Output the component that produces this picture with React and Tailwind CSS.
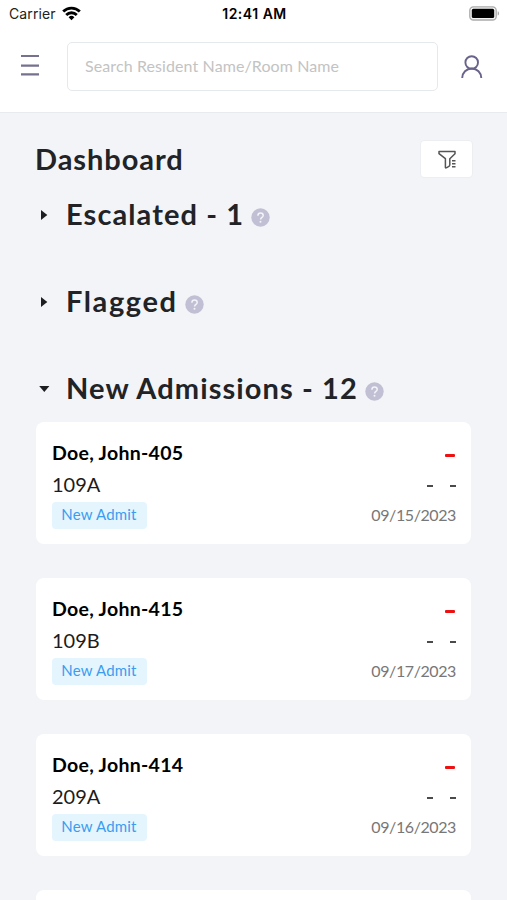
import React from "react";

const admissions = [
  { name: "Doe, John-405", room: "109A", date: "09/15/2023" },
  { name: "Doe, John-415", room: "109B", date: "09/17/2023" },
  { name: "Doe, John-414", room: "209A", date: "09/16/2023" },
];

function StatusBar() {
  return (
    <div className="grid h-[27px] shrink-0 grid-cols-3 items-center pr-[7px] pl-[9px] font-['Inter',sans-serif] text-[14px] text-[#222]">
      <div className="flex items-center gap-[6px]">
        <span className="tracking-[0.1px]">Carrier</span>
        <svg width="19" height="15" viewBox="0 0 19 15" fill="none" stroke="#000" strokeWidth="2.8">
          <path d="M1.2 5.6a11.8 11.8 0 0 1 16.6 0" />
          <path d="M4.2 8.9a7.6 7.6 0 0 1 10.6 0" />
          <path d="M9.5 14.2l-2.9-3a4.2 4.2 0 0 1 5.8 0z" fill="#000" stroke="none" />
        </svg>
      </div>
      <div className="text-center text-[14px] font-semibold tracking-[0.5px] whitespace-nowrap text-black">12:41 AM</div>
      <svg className="justify-self-end" width="31" height="15" viewBox="0 0 31 15">
        <rect x="0.8" y="0.8" width="26.4" height="13.2" rx="3.6" fill="#f4f4f4" stroke="#aaa" strokeWidth="1.3" />
        <rect x="2.8" y="2.8" width="22.4" height="9.2" rx="1.6" fill="#000" />
        <path d="M28.7 5.2c1.8.6 1.8 3.8 0 4.4z" fill="#aaa" />
      </svg>
    </div>
  );
}

function Header() {
  return (
    <header className="flex h-[86px] shrink-0 items-start border-b border-[#e8ebee] bg-white pt-[15px] pl-[21px]">
      <svg className="mt-3 shrink-0" width="18" height="24" viewBox="0 0 18 24" stroke="#77708f" strokeWidth="2.2">
        <path d="M0 2h18M0 11.7h18M0 20.3h18" />
      </svg>
      <div className="ml-7 flex h-[49px] w-[371px] items-center rounded-[5px] border border-[#e6e9eb] pb-[2px] pl-[17px] text-[16px] tracking-[0.1px] text-[#c3c3c3]">
        Search Resident Name/Room Name
      </div>
      <svg className="mt-[13px] ml-[23px]" width="22" height="24" viewBox="0 0 22 24" fill="none" stroke="#68638a" strokeWidth="1.9">
        <circle cx="10.7" cy="7.5" r="6.3" />
        <path d="M1.2 23a9.55 9.55 0 0 1 19.1 0" />
      </svg>
    </header>
  );
}

function SectionTitle({ open, children, tracking }) {
  return (
    <h2 className="flex h-9 items-center text-[29px] leading-9 font-bold text-[#212326]">
      <svg className="mt-px mr-[16px] ml-[3px] shrink-0" width="11" height="12" viewBox="0 0 11 12" fill="#1c1e20">
        <path d={open ? "M0.2 3h10.2L5.3 9z" : "M2 1v10L8.3 6z"} />
      </svg>
      <span className={tracking}>{children}</span>
      <svg className="mt-[6px] ml-[7px]" width="19" height="19" viewBox="0 0 19 19">
        <circle cx="9.5" cy="9.5" r="9.2" fill="#c1bfd3" />
        <path d="M6.9 7.7c0-1.7 1.1-2.7 2.6-2.7s2.7 1 2.7 2.4c0 1.9-2.6 2-2.6 4" fill="none" stroke="#f3f3f9" strokeWidth="1.5" />
        <circle cx="9.5" cy="13.8" r="1" fill="#f3f3f9" />
      </svg>
    </h2>
  );
}

function ResidentCard({ name, room, date }) {
  return (
    <article className="flex h-[122px] shrink-0 justify-between rounded-[8px] bg-white pt-[17px] pr-[15px] pl-4">
      <div className="flex flex-col items-start">
        <div className="h-[29px] text-[19.5px] leading-[28px] font-bold tracking-[0.3px] text-black">{name}</div>
        <div className="mt-[1px] h-[33px] text-[20px] leading-[30px] text-[#1c1c1c]">{room}</div>
        <div className="flex h-[27px] w-[95px] items-center justify-center rounded-[4px] bg-[#e4f5fe] pr-px pb-[2px] text-[15px] tracking-[0.2px] text-[#3b9cf0]">
          New Admit
        </div>
      </div>
      <div className="flex flex-col items-end">
        <div className="mt-[15px] mr-[1px] h-[3px] w-[10px] rounded-[1px] bg-[#ee1111]" />
        <div className="mt-[28px] flex gap-[17px]">
          <div className="h-[2px] w-[6px] bg-[#4a4a4a]" />
          <div className="h-[2px] w-[6px] bg-[#4a4a4a]" />
        </div>
        <div className="mt-[17px] text-[16px] leading-[22px] tracking-[-0.4px] text-[#777]">{date}</div>
      </div>
    </article>
  );
}

export default function App() {
  return (
    <div className="flex h-[900px] w-[507px] flex-col overflow-hidden bg-white font-['Lato','Noto_Sans',sans-serif]">
      <StatusBar />
      <Header />
      <main className="flex min-h-0 flex-1 flex-col overflow-hidden bg-[#f3f4f8] px-[36px]">
        <div className="mt-[27px] flex h-[38px] shrink-0 items-center justify-between">
          <h1 className="-ml-px text-[29px] font-bold tracking-[0.95px] text-[#212326]">Dashboard</h1>
          <button className="mr-[-2px] flex h-[38px] w-[53px] items-center justify-center rounded-[4px] border border-[#eceef1] bg-white pt-px">
            <svg width="18" height="20" viewBox="0 0 18 20" fill="none" stroke="#555" strokeWidth="1.5" strokeLinejoin="round">
              <path d="M1 1.5h16v2.2l-5.2 5v6.2c0 1.2-4.4 4-4.4 2.6V8.7L1 3.7z" />
              <path d="M14 10.7h3.5M14 13.7h3.5M14 16.7h3.5" />
            </svg>
          </button>
        </div>
        <section className="mt-[18px] flex flex-col gap-[51px]">
          <SectionTitle tracking="tracking-[1.1px]">Escalated - 1</SectionTitle>
          <SectionTitle tracking="tracking-[1.6px]">Flagged</SectionTitle>
          <SectionTitle open tracking="tracking-[1.1px]">New Admissions - 12</SectionTitle>
        </section>
        <section className="mt-[16px] flex min-h-0 flex-1 flex-col gap-[34px]">
          {admissions.map((resident) => (
            <ResidentCard key={resident.name} {...resident} />
          ))}
          <article className="min-h-0 flex-1 rounded-t-[8px] bg-white" />
        </section>
      </main>
    </div>
  );
}
